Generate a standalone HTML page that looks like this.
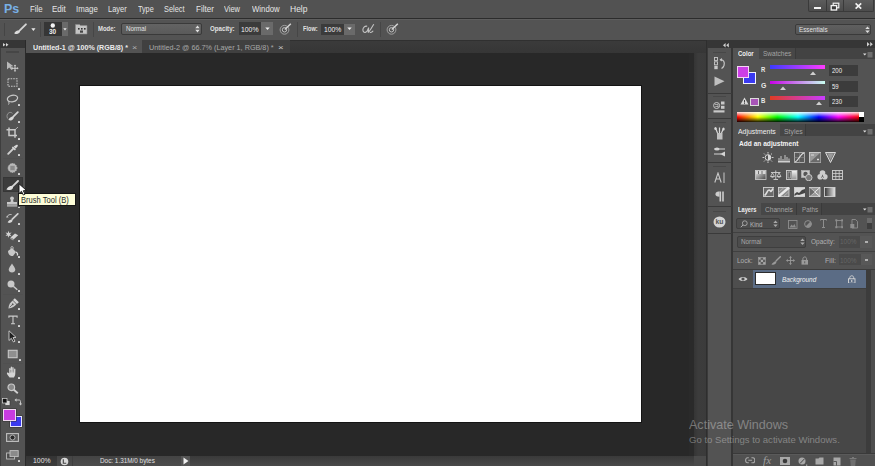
<!DOCTYPE html>
<html><head><meta charset="utf-8">
<style>
*{margin:0;padding:0;box-sizing:border-box}
html,body{width:875px;height:466px;overflow:hidden;background:#282828;font-family:"Liberation Sans",sans-serif;color:#dcdcdc;position:relative}
.a{position:absolute;display:block}
.t{position:absolute;white-space:pre;line-height:1}
</style></head><body>
<div class="a" style="left:0px;top:0px;width:875px;height:466px;background:#282828;"></div>
<div class="a" style="left:0px;top:0px;width:875px;height:18px;background:#525252;"></div>
<div class="a" style="left:0px;top:18px;width:875px;height:1px;background:#2c2c2c;"></div>
<div class="a" style="left:0px;top:19px;width:875px;height:21px;background:#535353;"></div>
<div class="a" style="left:0px;top:19px;width:875px;height:1px;background:#5e5e5e;"></div>
<div class="a" style="left:0px;top:40px;width:25px;height:426px;background:#535353;"></div>
<div class="a" style="left:0px;top:40px;width:1px;height:426px;background:#3e3e3e;"></div>
<div class="a" style="left:0px;top:40px;width:25px;height:8px;background:#363636;"></div>
<div class="a" style="left:25px;top:40px;width:1px;height:426px;background:#2a2a2a;"></div>
<div class="a" style="left:26px;top:40px;width:681px;height:13px;background:linear-gradient(#3b3b3b,#363636);"></div>
<div class="a" style="left:26px;top:40px;width:681px;height:1px;background:#303030;"></div>
<div class="a" style="left:689px;top:53px;width:5px;height:403px;background:#2a2a2a;"></div>
<div class="a" style="left:694px;top:53px;width:12px;height:403px;background:linear-gradient(90deg,#353535,#3c3c3c 35%,#3b3b3b);"></div>
<div class="a" style="left:706px;top:40px;width:1px;height:426px;background:#2e2e2e;"></div>
<div class="a" style="left:79px;top:85px;width:563px;height:338px;background:#ffffff;border:1px solid #141414;"></div>
<div class="a" style="left:26px;top:456px;width:668px;height:10px;background:linear-gradient(#3a3a3a,#494949);"></div>
<div class="a" style="left:694px;top:456px;width:12px;height:10px;background:#4a4a4a;"></div>
<div class="a" style="left:707px;top:40px;width:168px;height:8px;background:#363636;"></div>
<div class="a" style="left:707px;top:48px;width:25px;height:418px;background:#535353;"></div>
<div class="a" style="left:707px;top:48px;width:1px;height:418px;background:#3a3a3a;"></div>
<div class="a" style="left:731px;top:48px;width:2px;height:418px;background:#363636;"></div>
<div class="a" style="left:733px;top:48px;width:142px;height:418px;background:#535353;"></div>
<div class="t" style="left:3.96px;top:3px;font-size:12px;color:#78b0e6;font-weight:bold;transform:scaleX(1.038);transform-origin:0 0;">Ps</div>
<div class="t" style="left:29.51px;top:5px;font-size:8.8px;color:#e6e6e6;transform:scaleX(0.892);transform-origin:0 0;">File</div>
<div class="t" style="left:52.09px;top:5px;font-size:8.8px;color:#e6e6e6;transform:scaleX(0.914);transform-origin:0 0;">Edit</div>
<div class="t" style="left:75.51px;top:5px;font-size:8.8px;color:#e6e6e6;transform:scaleX(0.891);transform-origin:0 0;">Image</div>
<div class="t" style="left:107.95px;top:5px;font-size:8.8px;color:#e6e6e6;transform:scaleX(0.852);transform-origin:0 0;">Layer</div>
<div class="t" style="left:138.00px;top:5px;font-size:8.8px;color:#e6e6e6;transform:scaleX(0.821);transform-origin:0 0;">Type</div>
<div class="t" style="left:164.16px;top:5px;font-size:8.8px;color:#e6e6e6;transform:scaleX(0.837);transform-origin:0 0;">Select</div>
<div class="t" style="left:195.69px;top:5px;font-size:8.8px;color:#e6e6e6;transform:scaleX(0.911);transform-origin:0 0;">Filter</div>
<div class="t" style="left:224.00px;top:5px;font-size:8.8px;color:#e6e6e6;transform:scaleX(0.842);transform-origin:0 0;">View</div>
<div class="t" style="left:251.50px;top:5px;font-size:8.8px;color:#e6e6e6;transform:scaleX(0.884);transform-origin:0 0;">Window</div>
<div class="t" style="left:289.84px;top:5px;font-size:8.8px;color:#e6e6e6;transform:scaleX(0.965);transform-origin:0 0;">Help</div>
<div class="a" style="left:808px;top:0px;width:66px;height:12px;background:linear-gradient(#5c5c5c,#4c4c4c);border:1px solid #3a3a3a;border-top:none;border-radius:0 0 2px 2px;"></div>
<div class="a" style="left:826px;top:0px;width:1px;height:11px;background:#3a3a3a;"></div>
<div class="a" style="left:843px;top:0px;width:1px;height:11px;background:#3a3a3a;"></div>
<div class="a" style="left:814px;top:6.8px;width:7px;height:2px;background:#f2f2f2;"></div>
<svg class="a" style="left:830px;top:2px;" width="10" height="9" viewBox="0 0 10 9"><rect x="3.2" y="1.2" width="5.6" height="4.6" fill="none" stroke="#f0f0f0" stroke-width="1.2"/><rect x="1.2" y="3.6" width="5.4" height="4.4" fill="#3a3a3a" stroke="#f4f4f4" stroke-width="1.3"/></svg>
<svg class="a" style="left:854.2px;top:1.8px;" width="9" height="8" viewBox="0 0 9 8"><path d="M1.6 1.3 L7.2 6.7 M7.2 1.3 L1.6 6.7" stroke="#f2f2f2" stroke-width="1.6"/></svg>
<div class="t" style="left:97.80px;top:25px;font-size:7.2px;color:#e2e2e2;font-weight:bold;transform:scaleX(0.824);transform-origin:0 0;">Mode:</div>
<div class="a" style="left:121px;top:23px;width:81px;height:12px;background:linear-gradient(#636363,#5a5a5a);border:1px solid #3a3a3a;border-radius:2px;"></div>
<div class="t" style="left:125.50px;top:25px;font-size:7.2px;color:#e2e2e2;transform:scaleX(0.874);transform-origin:0 0;">Normal</div>
<div class="t" style="left:210.00px;top:25px;font-size:7.2px;color:#e2e2e2;font-weight:bold;transform:scaleX(0.857);transform-origin:0 0;">Opacity:</div>
<div class="a" style="left:239px;top:22px;width:22px;height:13px;background:#3b3b3b;"></div>
<div class="a" style="left:261px;top:22px;width:12px;height:13px;background:#6a6a6a;"></div>
<div class="t" style="left:241.05px;top:26px;font-size:7.2px;color:#f0f0f0;transform:scaleX(0.953);transform-origin:0 0;">100%</div>
<div class="t" style="left:303.10px;top:25px;font-size:7.2px;color:#e2e2e2;font-weight:bold;transform:scaleX(0.778);transform-origin:0 0;">Flow:</div>
<div class="a" style="left:321px;top:23.5px;width:23px;height:11.5px;background:#3b3b3b;"></div>
<div class="a" style="left:344px;top:23.5px;width:11px;height:11.5px;background:#6a6a6a;"></div>
<div class="t" style="left:323.75px;top:26px;font-size:7.2px;color:#f0f0f0;transform:scaleX(0.947);transform-origin:0 0;">100%</div>
<div class="a" style="left:795px;top:24px;width:76px;height:11px;background:linear-gradient(#5f5f5f,#565656);border:1px solid #3a3a3a;border-radius:2px;"></div>
<div class="t" style="left:798.50px;top:26px;font-size:7.2px;color:#e2e2e2;transform:scaleX(0.873);transform-origin:0 0;">Essentials</div>
<div class="a" style="left:4px;top:23px;width:1px;height:13px;background:#454545;"></div>
<svg class="a" style="left:13px;top:23px;" width="15" height="12" viewBox="0 0 15 12"><path d="M12.9 1.3 L6.8 7.4" stroke="#d4d4d4" stroke-width="1.9" stroke-linecap="round"/><path d="M1.2 10.2 C2.4 8.3 4.4 7 6.9 7.3 C7.5 8.6 6.6 10.5 4.2 11 C3.1 11.2 2 10.9 1.2 10.2Z" fill="#dcdcdc"/></svg>
<svg class="a" style="left:31px;top:27.5px;" width="5" height="3.5" viewBox="0 0 5 3.5"><path d="M0.3 0.3 L4.5 0.3 L2.4 3Z" fill="#e8e8e8"/></svg>
<div class="a" style="left:40px;top:22px;width:1px;height:15px;background:#464646;"></div>
<div class="a" style="left:44px;top:22px;width:18px;height:14px;background:#363636;"></div>
<div class="a" style="left:62px;top:22px;width:6px;height:14px;background:#6a6a6a;"></div>
<svg class="a" style="left:63px;top:28px;" width="4" height="3" viewBox="0 0 4 3"><path d="M0.3 0.3 L3.7 0.3 L2 2.5Z" fill="#e8e8e8"/></svg>
<svg class="a" style="left:49px;top:23px;" width="8" height="5" viewBox="0 0 8 5"><circle cx="3.8" cy="2.5" r="2.2" fill="#f4f4f4"/></svg>
<div class="t" style="left:49.10px;top:29px;font-size:6.6px;color:#f0f0f0;font-weight:bold;transform:scaleX(0.986);transform-origin:0 0;">30</div>
<svg class="a" style="left:75px;top:23px;" width="13" height="12" viewBox="0 0 13 12"><path d="M0.5 1.5 L4.5 1.5 L5.5 2.5 L12 2.5 L12 11 L0.5 11Z" fill="#c4c4c4" stroke="#8a8a8a" stroke-width="0.6"/><rect x="3" y="5" width="1.6" height="1.6" fill="#333"/><rect x="6" y="5" width="1.6" height="1.6" fill="#333"/><rect x="9" y="5" width="1.6" height="1.6" fill="#333"/><rect x="5" y="7.5" width="3" height="2.2" fill="#444"/></svg>
<div class="a" style="left:93px;top:22px;width:1px;height:15px;background:#464646;"></div>
<svg class="a" style="left:195px;top:25px;" width="5" height="8" viewBox="0 0 5 8"><path d="M0.3 3.2 L2.5 0.5 L4.7 3.2Z M0.3 4.8 L2.5 7.5 L4.7 4.8Z" fill="#e0e0e0"/></svg>
<svg class="a" style="left:264.5px;top:27px;" width="5" height="4" viewBox="0 0 5 4"><path d="M0.3 0.5 L4.7 0.5 L2.5 3Z" fill="#f0f0f0"/></svg>
<svg class="a" style="left:347px;top:27px;" width="5" height="4" viewBox="0 0 5 4"><path d="M0.3 0.5 L4.7 0.5 L2.5 3Z" fill="#f0f0f0"/></svg>
<svg class="a" style="left:279px;top:23px;" width="13" height="12" viewBox="0 0 13 12"><circle cx="5.5" cy="6.8" r="4.4" fill="none" stroke="#a8a8a8" stroke-width="0.9"/><circle cx="5.5" cy="6.8" r="2.2" fill="none" stroke="#c0c0c0" stroke-width="1"/><path d="M5.8 6.5 L11.8 0.8" stroke="#d4d4d4" stroke-width="1.5"/></svg>
<div class="a" style="left:297px;top:22px;width:1px;height:15px;background:#464646;"></div>
<svg class="a" style="left:362px;top:23px;" width="13" height="11" viewBox="0 0 13 11"><path d="M5.2 3.2 C2.5 2.8 0.9 4.8 0.9 6.8 C0.9 8.6 2 9.6 3.3 9.4 C4.8 9.2 5.8 7 6.6 4.6 C6.8 6.5 6.5 8.5 6 9.6 M6.2 9.5 C8 8 10 4 11.8 1.2 M7.8 9.4 C9 9.6 10.5 8.8 11.2 7.8" fill="none" stroke="#c4c4c4" stroke-width="1.1"/></svg>
<div class="a" style="left:380px;top:22px;width:1px;height:15px;background:#464646;"></div>
<svg class="a" style="left:386px;top:23px;" width="13" height="12" viewBox="0 0 13 12"><circle cx="5.5" cy="6.8" r="4.4" fill="none" stroke="#a8a8a8" stroke-width="0.9"/><circle cx="5.5" cy="6.8" r="2.2" fill="none" stroke="#c0c0c0" stroke-width="1"/><path d="M5.8 6.5 L11.8 0.8" stroke="#d4d4d4" stroke-width="1.5"/></svg>
<svg class="a" style="left:865px;top:26px;" width="5" height="8" viewBox="0 0 5 8"><path d="M0.3 3 L2.5 0.5 L4.7 3Z M0.3 4.6 L2.5 7.1 L4.7 4.6Z" fill="#e0e0e0"/></svg>
<div class="a" style="left:26px;top:40px;width:116px;height:13px;background:#535353;"></div>
<div class="t" style="left:32.80px;top:44px;font-size:7.6px;color:#ececec;font-weight:bold;transform:scaleX(0.935);transform-origin:0 0;">Untitled-1 @ 100% (RGB/8) *</div>
<div class="t" style="left:132.47px;top:44px;font-size:8px;color:#b0b0b0;transform:scaleX(1.133);transform-origin:0 0;">×</div>
<div class="a" style="left:142px;top:40px;width:148px;height:13px;background:#404040;"></div>
<div class="t" style="left:148.80px;top:44px;font-size:7.6px;color:#a8a8a8;transform:scaleX(0.955);transform-origin:0 0;">Untitled-2 @ 66.7% (Layer 1, RGB/8) *</div>
<div class="t" style="left:278.00px;top:44px;font-size:8px;color:#c8c8c8;transform:scaleX(1.200);transform-origin:0 0;">×</div>
<div class="a" style="left:26px;top:456px;width:31px;height:10px;background:linear-gradient(#343434,#3c3c3c);"></div>
<div class="t" style="left:32.69px;top:458px;font-size:6.8px;color:#e0e0e0;transform:scaleX(1.012);transform-origin:0 0;">100%</div>
<div class="a" style="left:57px;top:456px;width:15px;height:10px;background:linear-gradient(#444444,#4c4c4c);"></div>
<div class="a" style="left:72px;top:456px;width:109px;height:10px;background:linear-gradient(#444444,#4c4c4c);"></div>
<div class="a" style="left:72px;top:456px;width:1px;height:10px;background:#3e3e3e;"></div>
<div class="t" style="left:99.60px;top:458px;font-size:6.8px;color:#e0e0e0;transform:scaleX(0.936);transform-origin:0 0;">Doc: 1.31M/0 bytes</div>
<div class="a" style="left:181px;top:456px;width:9px;height:10px;background:#555555;"></div>
<svg class="a" style="left:60px;top:457px;" width="9" height="9" viewBox="0 0 9 9"><circle cx="4.5" cy="4.5" r="3.8" fill="#d8d8d8"/><path d="M3.3 2.3 L3.3 6.3 L6.2 6.3" fill="none" stroke="#444" stroke-width="1.1"/></svg>
<svg class="a" style="left:183px;top:457px;" width="6" height="8" viewBox="0 0 6 8"><path d="M0.5 0.5 L5.5 4 L0.5 7.5Z" fill="#f0f0f0"/></svg>
<svg class="a" style="left:2.6px;top:42.6px;" width="7" height="5" viewBox="0 0 7 5"><path d="M0 0 L2.5 1.8 L0 3.6Z M3 0 L5.5 1.8 L3 3.6Z" fill="#d4d4d4"/></svg>
<div class="a" style="left:6px;top:51px;width:13px;height:1.5px;background:#464646;"></div>
<svg class="a" style="left:6px;top:61px;" width="14" height="11" viewBox="0 0 14 11"><path d="M1 0.5 L1 8.5 L3.2 6.4 L5.5 9 L7 7.8 L5 5.5 L7.5 5.3Z" fill="#b8b8b8"/><path d="M9 4.5 L9 10 M6.3 7.3 L11.8 7.3" stroke="#cfcfcf" stroke-width="1"/><path d="M9 3.6 L7.8 5 L10.2 5Z M9 11 L7.8 9.6 L10.2 9.6Z M5.4 7.3 L6.8 6.1 L6.8 8.5Z M12.6 7.3 L11.2 6.1 L11.2 8.5Z" fill="#cfcfcf"/></svg>
<svg class="a" style="left:7px;top:78px;" width="11" height="9" viewBox="0 0 11 9"><rect x="1" y="0.8" width="9" height="7.4" fill="none" stroke="#c4c4c4" stroke-width="1.1" stroke-dasharray="1.6 1"/></svg>
<div class="a" style="left:18.4px;top:87.9px;width:1.8px;height:1.8px;background:#d8d8d8;border-radius:0.5px;"></div>
<svg class="a" style="left:6px;top:94px;" width="13" height="11" viewBox="0 0 13 11"><ellipse cx="6.5" cy="4.5" rx="5.2" ry="3.2" transform="rotate(-12 6.5 4.5)" fill="none" stroke="#c8c8c8" stroke-width="1.2"/><path d="M3 7 C2.5 8.5 3.5 9.5 2.5 10.5" fill="none" stroke="#c8c8c8" stroke-width="1"/></svg>
<div class="a" style="left:18.4px;top:104.4px;width:1.8px;height:1.8px;background:#d8d8d8;border-radius:0.5px;"></div>
<svg class="a" style="left:6px;top:111px;" width="13" height="10" viewBox="0 0 13 10"><path d="M1.6 7.5 C0.5 5.5 0.8 2.6 3.2 1.6 C4.5 1.1 5.8 1.6 6.5 2.4" fill="none" stroke="#9a9a9a" stroke-width="0.9"/><path d="M11.8 1.2 L7.3 5.6" stroke="#d4d4d4" stroke-width="1.8" stroke-linecap="round"/><path d="M2.4 8.6 C3.4 6.6 5.4 5.2 7.6 5.5 C8.2 6.9 7.3 8.8 5.1 9.4 C4.1 9.6 3.1 9.3 2.4 8.6Z" fill="#dadada"/></svg>
<div class="a" style="left:18.4px;top:121.2px;width:1.8px;height:1.8px;background:#d8d8d8;border-radius:0.5px;"></div>
<svg class="a" style="left:6px;top:127px;" width="13" height="11" viewBox="0 0 13 11"><path d="M3 0.5 L3 8.5 L11 8.5 M0.5 2.8 L9 2.8 L9 10.8" fill="none" stroke="#c8c8c8" stroke-width="1.5"/><path d="M9 2.8 L12 0" stroke="#c8c8c8" stroke-width="0.8"/></svg>
<div class="a" style="left:18.4px;top:138.20000000000002px;width:1.8px;height:1.8px;background:#d8d8d8;border-radius:0.5px;"></div>
<svg class="a" style="left:7px;top:144px;" width="12" height="11" viewBox="0 0 12 11"><path d="M1.2 9.8 L6.6 4.4" stroke="#cfcfcf" stroke-width="1.9" stroke-linecap="round"/><path d="M6.6 2.6 L9.2 0.9 C10.2 0.3 11.3 1.2 10.7 2.2 L8.6 4.7Z" fill="#d8d8d8"/><path d="M5.4 3 L8.4 6" stroke="#d8d8d8" stroke-width="1.4"/></svg>
<div class="a" style="left:18.4px;top:154.4px;width:1.8px;height:1.8px;background:#d8d8d8;border-radius:0.5px;"></div>
<div class="a" style="left:3px;top:158px;width:20px;height:1px;background:#505050;"></div>
<svg class="a" style="left:7px;top:163px;" width="11" height="10" viewBox="0 0 11 10"><circle cx="5.5" cy="5" r="4.4" fill="#b8b8b8"/><rect x="3.3" y="2.8" width="4.4" height="4.4" fill="#8a8a8a"/><circle cx="5.5" cy="5" r="4.4" fill="none" stroke="#cfcfcf" stroke-width="0.9" stroke-dasharray="1 1"/></svg>
<div class="a" style="left:18.4px;top:173.20000000000002px;width:1.8px;height:1.8px;background:#d8d8d8;border-radius:0.5px;"></div>
<div class="a" style="left:3px;top:177px;width:19.5px;height:15px;background:#3c3c3c;border:1px solid #363636;"></div>
<svg class="a" style="left:6px;top:180px;" width="13" height="10" viewBox="0 0 13 10"><path d="M12 1 L6.8 6.2" stroke="#d4d4d4" stroke-width="1.8" stroke-linecap="round"/><path d="M0.4 9.4 C1.6 7.2 3.9 5.6 6.9 5.9 C7.6 7.4 6.6 9.6 3.9 10 C2.6 10.2 1.3 9.9 0.4 9.4Z" fill="#dcdcdc"/></svg>
<svg class="a" style="left:6px;top:196px;" width="12" height="11" viewBox="0 0 12 11"><circle cx="6" cy="2.3" r="1.9" fill="#c8c8c8"/><path d="M5 3.5 L7 3.5 L7.5 6 L4.5 6Z" fill="#c8c8c8"/><rect x="1" y="6" width="10" height="2.6" fill="#c8c8c8"/><rect x="1" y="9.3" width="10" height="1.2" fill="#c8c8c8"/></svg>
<div class="a" style="left:18.4px;top:206.5px;width:1.8px;height:1.8px;background:#d8d8d8;border-radius:0.5px;"></div>
<svg class="a" style="left:6px;top:213px;" width="13" height="10" viewBox="0 0 13 10"><path d="M11.8 0.8 L6.3 6.2" stroke="#d0d0d0" stroke-width="1.7" stroke-linecap="round"/><path d="M1.6 9.3 C2.6 7.6 4.3 6.4 6.4 6.6 C6.9 7.8 6.1 9.4 4.2 9.8 C3.3 10 2.3 9.8 1.6 9.3Z" fill="#d8d8d8"/><path d="M1.2 3.8 C1.8 2 3.6 1.2 5.6 1.6" fill="none" stroke="#c4c4c4" stroke-width="1"/><path d="M0 4.6 L1.2 2.4 L2.6 4.4Z" fill="#c4c4c4"/></svg>
<div class="a" style="left:18.4px;top:223.20000000000002px;width:1.8px;height:1.8px;background:#d8d8d8;border-radius:0.5px;"></div>
<svg class="a" style="left:5px;top:229.5px;" width="14" height="11" viewBox="0 0 14 11"><path d="M3.5 0.8 L4.3 3 L6.6 2.6 L5 4.3 L6.4 6.2 L4.2 5.7 L3.4 7.8 L2.7 5.6 L0.5 5.9 L2 4.2 L0.6 2.4 L2.8 2.9Z" fill="#d0d0d0"/><path d="M5.5 7.5 L10 3.6 L13.2 5.2 L8.8 9.2Z" fill="#d4d4d4"/><path d="M5.5 7.5 L8.8 9.2 L8.2 10.4 L5 8.8Z" fill="#9a9a9a"/></svg>
<div class="a" style="left:18.4px;top:239.9px;width:1.8px;height:1.8px;background:#d8d8d8;border-radius:0.5px;"></div>
<svg class="a" style="left:7px;top:246px;" width="12" height="11" viewBox="0 0 12 11"><path d="M1 5 L5 2 L9 6 L6 10 C4 10.5 1 9 1 5Z" fill="#c8c8c8"/><path d="M4.5 4 C3.5 2 3.8 0.5 5 0.5 C6.2 0.5 6.5 2 5.8 3.5" fill="none" stroke="#c8c8c8" stroke-width="0.9"/><path d="M9 6 C10.5 7 11 8 10.2 9.5" fill="none" stroke="#dcdcdc" stroke-width="1.3"/></svg>
<div class="a" style="left:18.4px;top:256.4px;width:1.8px;height:1.8px;background:#d8d8d8;border-radius:0.5px;"></div>
<svg class="a" style="left:8px;top:263px;" width="8" height="10" viewBox="0 0 8 10"><path d="M4 0.5 C5 2.5 7.3 4.8 7.3 6.6 C7.3 8.4 5.8 9.5 4 9.5 C2.2 9.5 0.7 8.4 0.7 6.6 C0.7 4.8 3 2.5 4 0.5Z" fill="#c4c4c4"/></svg>
<div class="a" style="left:18.4px;top:273.2px;width:1.8px;height:1.8px;background:#d8d8d8;border-radius:0.5px;"></div>
<svg class="a" style="left:7px;top:280px;" width="12" height="11" viewBox="0 0 12 11"><circle cx="4" cy="4" r="3.5" fill="#c8c8c8"/><path d="M6.3 6.3 L10.3 9.8" stroke="#c8c8c8" stroke-width="1.5"/></svg>
<div class="a" style="left:18.4px;top:289.9px;width:1.8px;height:1.8px;background:#d8d8d8;border-radius:0.5px;"></div>
<div class="a" style="left:3px;top:293.5px;width:20px;height:1px;background:#505050;"></div>
<svg class="a" style="left:7px;top:297.5px;" width="12" height="12" viewBox="0 0 12 12"><g transform="rotate(-135 6 6)"><path d="M6 -0.5 C8.6 2.5 9 5.5 8.6 8.2 L3.4 8.2 C3 5.5 3.4 2.5 6 -0.5Z" fill="#cacaca"/><rect x="3.2" y="8.8" width="5.6" height="2.6" fill="#d6d6d6"/><path d="M6 1.5 L6 5.2" stroke="#555" stroke-width="0.7"/><circle cx="6" cy="5.6" r="0.9" fill="#555"/></g></svg>
<div class="a" style="left:18.4px;top:308.29999999999995px;width:1.8px;height:1.8px;background:#d8d8d8;border-radius:0.5px;"></div>
<svg class="a" style="left:8px;top:315px;" width="10" height="10" viewBox="0 0 10 10"><path d="M0.9 2.8 L0.9 1.1 L9.1 1.1 L9.1 2.8 M5 1.1 L5 8.8 M3 8.8 L7 8.8" fill="none" stroke="#cccccc" stroke-width="1.1"/></svg>
<div class="a" style="left:18.4px;top:324.9px;width:1.8px;height:1.8px;background:#d8d8d8;border-radius:0.5px;"></div>
<svg class="a" style="left:8px;top:330px;" width="9" height="13" viewBox="0 0 9 13"><path d="M1 0.8 L1 10.5 L3.3 8.3 L5.5 12 L7 11.2 L5 7.6 L8 7.4Z" fill="#202020" stroke="#cfcfcf" stroke-width="0.9"/></svg>
<div class="a" style="left:18.4px;top:340.9px;width:1.8px;height:1.8px;background:#d8d8d8;border-radius:0.5px;"></div>
<svg class="a" style="left:7px;top:349px;" width="11" height="10" viewBox="0 0 11 10"><rect x="1.3" y="1.3" width="8.8" height="7.4" fill="#8f8f8f" stroke="#c8c8c8" stroke-width="1.1"/></svg>
<div class="a" style="left:19.2px;top:359.2px;width:1.8px;height:1.8px;background:#d8d8d8;border-radius:0.5px;"></div>
<div class="a" style="left:3px;top:362.5px;width:20px;height:1px;background:#505050;"></div>
<svg class="a" style="left:6px;top:366px;" width="13" height="12" viewBox="0 0 13 12"><path d="M3.6 11.4 C2.4 10 0.6 8 0.9 7 C1.3 6.1 2.4 6.5 3.2 7.6 L3.2 2.6 C3.2 1.7 4.5 1.7 4.5 2.6 L4.5 6 L4.7 1.2 C4.7 0.3 6 0.3 6 1.2 L6 6 L6.3 1.7 C6.3 0.8 7.6 0.8 7.6 1.7 L7.6 6.2 L8.1 3.2 C8.2 2.3 9.5 2.4 9.4 3.3 L9.3 7.6 C9.3 9.4 8.6 10.6 8 11.4Z" fill="#d4d4d4"/><path d="M4.5 4 L4.5 6.5 M6 3.8 L6 6.5 M7.6 4.2 L7.6 6.6" stroke="#7a7a7a" stroke-width="0.5"/></svg>
<div class="a" style="left:18.4px;top:377.4px;width:1.8px;height:1.8px;background:#d8d8d8;border-radius:0.5px;"></div>
<svg class="a" style="left:7px;top:383px;" width="12" height="11" viewBox="0 0 12 11"><circle cx="4.3" cy="4.3" r="3.3" fill="#8a8a8a" stroke="#c8c8c8" stroke-width="1.2"/><path d="M6.8 6.8 L10.8 10.3" stroke="#d0d0d0" stroke-width="1.8"/></svg>
<svg class="a" style="left:2px;top:398px;" width="9" height="8" viewBox="0 0 9 8"><rect x="3" y="2.5" width="5" height="5" fill="#d8d8d8" stroke="#333" stroke-width="0.6"/><rect x="0.5" y="0.5" width="4.5" height="4.5" fill="#111" stroke="#d8d8d8" stroke-width="0.7"/></svg>
<svg class="a" style="left:14px;top:398px;" width="8" height="8" viewBox="0 0 8 8"><path d="M1.5 2 L5 2 C6 2 6.5 2.5 6.5 3.5 L6.5 6" fill="none" stroke="#c8c8c8" stroke-width="1"/><path d="M0.5 2 L2.5 0.3 L2.5 3.7Z M6.5 7.5 L4.8 5.5 L8.2 5.5Z" fill="#c8c8c8"/></svg>
<div class="a" style="left:10px;top:415.5px;width:12px;height:11.5px;background:#3a3af0;border:1px solid #e8e8ff;box-shadow:0 0 0 0.5px #333;"></div>
<div class="a" style="left:3px;top:408.5px;width:12.5px;height:12px;background:#c83ce0;border:1px solid #f0d8f0;box-shadow:0 0 0 0.5px #333;"></div>
<svg class="a" style="left:6px;top:433px;" width="13" height="9" viewBox="0 0 13 9"><rect x="0.6" y="0.6" width="11.8" height="7.8" fill="#5a5a5a" stroke="#c0c0c0" stroke-width="1.1"/><circle cx="6.5" cy="4.5" r="2.5" fill="#2a2a2a" stroke="#bdbdbd" stroke-width="0.9"/></svg>
<svg class="a" style="left:6px;top:450px;" width="13" height="10" viewBox="0 0 13 10"><rect x="0.6" y="3" width="8" height="6" fill="#4a4a4a" stroke="#c0c0c0" stroke-width="0.9"/><rect x="4" y="0.6" width="8.2" height="6" fill="#8a8a8a" stroke="#c0c0c0" stroke-width="0.9"/></svg>
<div class="a" style="left:18.4px;top:459.9px;width:1.8px;height:1.8px;background:#d8d8d8;border-radius:0.5px;"></div>
<svg class="a" style="left:723px;top:42.5px;" width="7" height="5" viewBox="0 0 7 5"><path d="M2.6 0 L0 2.2 L2.6 4.4Z M5.8 0 L3.2 2.2 L5.8 4.4Z" fill="#d0d0d0"/></svg>
<svg class="a" style="left:867px;top:42px;" width="7" height="5" viewBox="0 0 7 5"><path d="M0 0 L2.6 2.2 L0 4.4Z M3.2 0 L5.8 2.2 L3.2 4.4Z" fill="#d0d0d0"/></svg>
<div class="a" style="left:713px;top:51.5px;width:13px;height:1px;background:#474747;"></div>
<svg class="a" style="left:714px;top:57px;" width="12" height="13" viewBox="0 0 12 13"><rect x="0.5" y="0.5" width="3" height="3" fill="none" stroke="#c8c8c8" stroke-width="0.9"/><rect x="0.5" y="4.8" width="3" height="3" fill="none" stroke="#c8c8c8" stroke-width="0.9"/><rect x="0.3" y="8.8" width="3.4" height="3.4" fill="#c8c8c8"/><path d="M6.5 3 C9.5 2.5 11 5 10 8.5 C9.5 10 8.5 11 7.5 11.5" fill="none" stroke="#c8c8c8" stroke-width="1.2"/><path d="M5.5 2.8 L8 1 L7.8 4.5Z" fill="#c8c8c8"/></svg>
<svg class="a" style="left:714px;top:76px;" width="11" height="11" viewBox="0 0 11 11"><path d="M0.5 0.5 L10.5 5.2 L0.5 10Z" fill="#bfbfbf"/></svg>
<div class="a" style="left:708px;top:92.5px;width:24px;height:1px;background:#3a3a3a;"></div>
<div class="a" style="left:713px;top:96px;width:13px;height:1px;background:#474747;"></div>
<svg class="a" style="left:713px;top:101px;" width="13" height="12" viewBox="0 0 13 12"><circle cx="3.6" cy="4.5" r="3" fill="none" stroke="#c8c8c8" stroke-width="1"/><path d="M2 3.5 L5 3.5 L5 6.2 M2.3 5.5 L5 5.5" stroke="#c8c8c8" stroke-width="0.7" fill="none"/><rect x="8" y="0.5" width="3.5" height="3" fill="#c8c8c8"/><rect x="8" y="4.8" width="3.5" height="3" fill="#c8c8c8"/><rect x="0.5" y="9.3" width="11" height="2.2" fill="#c8c8c8"/></svg>
<div class="a" style="left:708px;top:117.5px;width:24px;height:1px;background:#3a3a3a;"></div>
<div class="a" style="left:713px;top:121.5px;width:13px;height:1px;background:#474747;"></div>
<svg class="a" style="left:714px;top:127px;" width="12" height="13" viewBox="0 0 12 13"><rect x="3" y="6" width="5.5" height="6.5" fill="#c0c0c0"/><path d="M3.5 6 L1.5 1 M5.5 6 L5.5 0.5 M7.5 6 L9.5 1.5" stroke="#d8d8d8" stroke-width="1.2"/><ellipse cx="1.5" cy="1.5" rx="1.2" ry="1.5" fill="#d8d8d8"/><ellipse cx="9.5" cy="2" rx="1.2" ry="1.5" fill="#d8d8d8"/></svg>
<svg class="a" style="left:713px;top:146px;" width="13" height="11" viewBox="0 0 13 11"><path d="M1 3 L12 3" stroke="#c8c8c8" stroke-width="1.1"/><ellipse cx="4" cy="3" rx="2.5" ry="1.6" fill="#d4d4d4"/><path d="M1 8 L8 8" stroke="#c8c8c8" stroke-width="1.1"/><path d="M7 8 L12 5.5 L12 10.5Z" fill="#d4d4d4"/></svg>
<div class="a" style="left:708px;top:162px;width:24px;height:1px;background:#3a3a3a;"></div>
<div class="a" style="left:713px;top:166px;width:13px;height:1px;background:#474747;"></div>
<svg class="a" style="left:714px;top:172px;" width="12" height="12" viewBox="0 0 12 12"><path d="M0.8 10.5 L4 1 L7.2 10.5 M2 7 L6 7" fill="none" stroke="#c8c8c8" stroke-width="1.1"/><path d="M10 0.5 L10 11" stroke="#c8c8c8" stroke-width="1"/></svg>
<svg class="a" style="left:715px;top:191px;" width="10" height="11" viewBox="0 0 10 11"><path d="M4.5 0.5 C1 0.5 0.5 2 0.5 3.2 C0.5 4.5 1.5 5.8 4.5 5.8Z" fill="#cdcdcd"/><rect x="4.5" y="0.5" width="1.6" height="10" fill="#cdcdcd"/><rect x="7.2" y="0.5" width="1.6" height="10" fill="#cdcdcd"/></svg>
<div class="a" style="left:708px;top:206px;width:24px;height:1px;background:#3a3a3a;"></div>
<div class="a" style="left:713px;top:210.5px;width:13px;height:1px;background:#474747;"></div>
<svg class="a" style="left:713px;top:216px;" width="13" height="12" viewBox="0 0 13 12"><ellipse cx="6.5" cy="6" rx="6" ry="5.6" fill="#d4d4d4"/><text x="6.5" y="8.4" font-family="Liberation Sans" font-size="6.8" font-weight="bold" fill="#555" text-anchor="middle">ku</text></svg>
<div class="a" style="left:708px;top:233px;width:24px;height:1px;background:#3a3a3a;"></div>
<div class="a" style="left:733px;top:48px;width:142px;height:10.5px;background:#434343;"></div>
<div class="a" style="left:733px;top:48px;width:25.5px;height:10.5px;background:#535353;"></div>
<div class="a" style="left:758.5px;top:48px;width:37px;height:10.5px;background:#474747;border-right:1px solid #3a3a3a;"></div>
<div class="t" style="left:737.90px;top:50px;font-size:7px;color:#f0f0f0;font-weight:bold;transform:scaleX(0.856);transform-origin:0 0;">Color</div>
<div class="t" style="left:763.00px;top:50px;font-size:7px;color:#a4a4a4;transform:scaleX(0.933);transform-origin:0 0;">Swatches</div>
<svg class="a" style="left:863px;top:51.5px;" width="10" height="6" viewBox="0 0 10 6"><path d="M0 1.5 L3.5 1.5 L1.75 3.5Z" fill="#e0e0e0"/><rect x="4.5" y="0" width="5" height="5.5" fill="#6e6e6e"/></svg>
<div class="a" style="left:743px;top:71.5px;width:12.5px;height:12.5px;background:#3a3af2;border:1px solid #f2f2ff;"></div>
<div class="a" style="left:736.5px;top:65.5px;width:12.5px;height:12px;background:#cc3ee6;border:1px solid #f4d4f4;"></div>
<div class="t" style="left:760.80px;top:66px;font-size:7.2px;color:#e8e8e8;font-weight:bold;transform:scaleX(0.820);transform-origin:0 0;">R</div>
<div class="t" style="left:760.60px;top:82px;font-size:7.2px;color:#e8e8e8;font-weight:bold;transform:scaleX(0.960);transform-origin:0 0;">G</div>
<div class="t" style="left:760.80px;top:97px;font-size:7.2px;color:#e8e8e8;font-weight:bold;transform:scaleX(0.840);transform-origin:0 0;">B</div>
<div class="a" style="left:770px;top:65px;width:54.5px;height:4px;background:linear-gradient(90deg,#3b3bff,#ff3bff);"></div>
<div class="a" style="left:770px;top:80.5px;width:54.5px;height:3.5px;background:linear-gradient(90deg,#c800e6,#c8fff0);"></div>
<div class="a" style="left:770px;top:96px;width:54.5px;height:4px;background:linear-gradient(90deg,#e03c22,#c83cff);"></div>
<svg class="a" style="left:809.5px;top:70.5px;" width="6" height="4.5" viewBox="0 0 6 4.5"><path d="M3 0.5 L6 4 L0 4Z" fill="#d0d0d0"/></svg>
<svg class="a" style="left:780px;top:85.5px;" width="6" height="4.5" viewBox="0 0 6 4.5"><path d="M3 0.5 L6 4 L0 4Z" fill="#d0d0d0"/></svg>
<svg class="a" style="left:816px;top:100.8px;" width="6" height="4.5" viewBox="0 0 6 4.5"><path d="M3 0.5 L6 4 L0 4Z" fill="#d0d0d0"/></svg>
<div class="a" style="left:829px;top:64.5px;width:29px;height:11px;background:#3c3c3c;"></div>
<div class="t" style="left:831.70px;top:67px;font-size:7.2px;color:#f0f0f0;transform:scaleX(0.842);transform-origin:0 0;">200</div>
<div class="a" style="left:829px;top:80.5px;width:29px;height:11px;background:#3c3c3c;"></div>
<div class="t" style="left:831.70px;top:83px;font-size:7.2px;color:#f0f0f0;transform:scaleX(0.837);transform-origin:0 0;">59</div>
<div class="a" style="left:829px;top:95.5px;width:29px;height:11px;background:#3c3c3c;"></div>
<div class="t" style="left:831.70px;top:98px;font-size:7.2px;color:#f0f0f0;transform:scaleX(0.842);transform-origin:0 0;">230</div>
<svg class="a" style="left:739.5px;top:97px;" width="9" height="8" viewBox="0 0 9 8"><path d="M4.5 0.5 L8.5 7.5 L0.5 7.5Z" fill="#d8d8d8"/><rect x="4" y="3" width="1" height="2.6" fill="#444"/><rect x="4" y="6" width="1" height="0.8" fill="#444"/></svg>
<div class="a" style="left:750px;top:97.5px;width:8.5px;height:8.5px;background:#a855b8;border:1px solid #dcdcdc;"></div>
<div class="a" style="left:737px;top:112px;width:122px;height:10px;background:linear-gradient(180deg,rgba(255,255,255,0.9) 0%,rgba(255,255,255,0) 50%,rgba(0,0,0,0) 50%,rgba(0,0,0,0.9) 100%),linear-gradient(90deg,#ff0000 0%,#ffff00 17%,#00ff00 33%,#00ffff 50%,#0000ff 67%,#ff00ff 83%,#ff0000 100%);"></div>
<div class="a" style="left:859px;top:112px;width:5px;height:5px;background:#ffffff;"></div>
<div class="a" style="left:859px;top:117px;width:5px;height:5px;background:#000000;"></div>
<div class="a" style="left:733px;top:124px;width:142px;height:11.5px;background:#434343;"></div>
<div class="a" style="left:733px;top:124px;width:46.5px;height:11.5px;background:#535353;"></div>
<div class="a" style="left:779.5px;top:124px;width:26.5px;height:11.5px;background:#474747;border-right:1px solid #3a3a3a;"></div>
<div class="t" style="left:737.50px;top:128px;font-size:7.2px;color:#f0f0f0;transform:scaleX(0.954);transform-origin:0 0;">Adjustments</div>
<div class="t" style="left:783.90px;top:128px;font-size:7.2px;color:#a4a4a4;transform:scaleX(0.958);transform-origin:0 0;">Styles</div>
<svg class="a" style="left:863px;top:128.5px;" width="10" height="6" viewBox="0 0 10 6"><path d="M0 1.5 L3.5 1.5 L1.75 3.5Z" fill="#e0e0e0"/><rect x="4.5" y="0" width="5" height="5.5" fill="#6e6e6e"/></svg>
<div class="t" style="left:739.10px;top:140px;font-size:7.2px;color:#f4f4f4;font-weight:bold;transform:scaleX(0.918);transform-origin:0 0;">Add an adjustment</div>
<svg class="a" style="left:762px;top:152px;" width="12" height="11" viewBox="0 0 12 11"><circle cx="6" cy="5.5" r="2.8" fill="none" stroke="#d8d8d8" stroke-width="1"/><path d="M6 2.7 A2.8 2.8 0 0 1 6 8.3Z" fill="#d8d8d8"/><path d="M6 0 L6 1.6 M6 9.4 L6 11 M0.5 5.5 L2.1 5.5 M9.9 5.5 L11.5 5.5 M2 1.5 L3.1 2.6 M8.9 8.4 L10 9.5 M10 1.5 L8.9 2.6 M3.1 8.4 L2 9.5" stroke="#d8d8d8" stroke-width="0.9"/></svg>
<svg class="a" style="left:778px;top:152px;" width="12" height="11" viewBox="0 0 12 11"><path d="M0.5 10 L0.5 6 L1.5 6 L1.5 10 M2.5 10 L2.5 4 L3.5 4 L3.5 10 M4.5 10 L4.5 7 L5.5 7 L5.5 10 M6.5 10 L6.5 3 L7.5 3 L7.5 10 M8.5 10 L8.5 5 L9.5 5 L9.5 10 M10.5 10 L10.5 6.5 L11.5 6.5 L11.5 10Z" fill="#c8c8c8"/><rect x="0" y="9" width="12" height="1.5" fill="#cfcfcf"/></svg>
<svg class="a" style="left:794px;top:152px;" width="11" height="11" viewBox="0 0 11 11"><rect x="0.5" y="0.5" width="10" height="10" fill="#5a5a5a" stroke="#c0c0c0" stroke-width="0.8"/><path d="M0.5 5.5 L10.5 5.5 M5.5 0.5 L5.5 10.5" stroke="#8a8a8a" stroke-width="0.6"/><path d="M1 10 C4 9.5 6 2 10 1" fill="none" stroke="#e0e0e0" stroke-width="1.1"/></svg>
<svg class="a" style="left:809px;top:152px;" width="12" height="11" viewBox="0 0 12 11"><rect x="0.5" y="0.5" width="11" height="10" fill="#9a9a9a" stroke="#d0d0d0" stroke-width="0.9"/><path d="M0.5 10.5 L11.5 0.5 L11.5 10.5Z" fill="#6a6a6a"/><path d="M2 3 L5 3 M8 7.5 L10 7.5 M9 6.5 L9 8.5" stroke="#eee" stroke-width="0.8"/></svg>
<svg class="a" style="left:824.5px;top:152px;" width="11" height="11" viewBox="0 0 11 11"><path d="M0.5 0.5 L10.5 0.5 L5.5 10.5Z" fill="#7a7a7a" stroke="#d8d8d8" stroke-width="1"/><path d="M2.5 1.5 L8.5 1.5 L5.5 7.5Z" fill="#9a9a9a"/></svg>
<svg class="a" style="left:755px;top:169.5px;" width="11.5" height="10" viewBox="0 0 11.5 10"><rect x="0.5" y="0.5" width="10.5" height="9" fill="url(#gh)" stroke="#d0d0d0" stroke-width="0.8"/><defs><linearGradient id="gh" x1="0" y1="0" x2="1" y2="1"><stop offset="0" stop-color="#eee"/><stop offset="1" stop-color="#444"/></linearGradient></defs><rect x="1" y="1" width="9.5" height="3" fill="#d8d8d8"/><path d="M3.5 1 L3.5 4 M7 1 L7 4" stroke="#555" stroke-width="0.8"/></svg>
<svg class="a" style="left:770px;top:169.5px;" width="11.5" height="10" viewBox="0 0 11.5 10"><path d="M5.75 0.5 L5.75 9 M1 2.5 L10.5 2.5 M3.5 9.5 L8 9.5" stroke="#d0d0d0" stroke-width="0.9"/><path d="M2.5 3 L0.5 6.5 L4.5 6.5Z M9 3 L7 6.5 L11 6.5Z" fill="none" stroke="#d0d0d0" stroke-width="0.8"/><path d="M0.5 6.5 C1 8 4 8 4.5 6.5 M7 6.5 C7.5 8 10.5 8 11 6.5" fill="#d0d0d0"/></svg>
<svg class="a" style="left:786px;top:169.5px;" width="11.5" height="10" viewBox="0 0 11.5 10"><rect x="0.5" y="0.5" width="10.5" height="9" fill="#dadada" stroke="#d0d0d0" stroke-width="0.8"/><rect x="1" y="1" width="4.5" height="8" fill="#5e5e5e"/><rect x="2" y="2" width="2.5" height="6" fill="none" stroke="#c8c8c8" stroke-width="0.6"/><rect x="6" y="1" width="4.5" height="8" fill="url(#gbw)"/><defs><linearGradient id="gbw" x1="0" y1="0" x2="0" y2="1"><stop offset="0" stop-color="#f0f0f0"/><stop offset="1" stop-color="#999"/></linearGradient></defs></svg>
<svg class="a" style="left:801px;top:169.5px;" width="11.5" height="11" viewBox="0 0 11.5 11"><rect x="0.5" y="0.5" width="8" height="7" fill="#c8c8c8" stroke="#bbb" stroke-width="0.6"/><circle cx="4.5" cy="4" r="2.2" fill="#555"/><circle cx="7.8" cy="7.6" r="3.2" fill="#7a7a7a" stroke="#cfcfcf" stroke-width="0.9"/></svg>
<svg class="a" style="left:816.5px;top:169.5px;" width="11" height="10" viewBox="0 0 11 10"><circle cx="5.5" cy="3" r="2.8" fill="#cdcdcd"/><circle cx="3.2" cy="6.8" r="2.8" fill="#cdcdcd"/><circle cx="7.8" cy="6.8" r="2.8" fill="#cdcdcd"/><path d="M5.5 4.8 L5.5 6.5 M4 7.5 L5.5 6.5 L7 7.5" stroke="#555" stroke-width="0.8" fill="none"/></svg>
<svg class="a" style="left:832px;top:169.5px;" width="11" height="10" viewBox="0 0 11 10"><rect x="0.5" y="0.5" width="10" height="9" fill="#5a5a5a" stroke="#d0d0d0" stroke-width="0.9"/><path d="M3.8 0.5 L3.8 9.5 M7.2 0.5 L7.2 9.5 M0.5 3.5 L10.5 3.5 M0.5 6.5 L10.5 6.5" stroke="#d0d0d0" stroke-width="0.8"/></svg>
<svg class="a" style="left:762.5px;top:187px;" width="11.5" height="10" viewBox="0 0 11.5 10"><rect x="0.5" y="0.5" width="10.5" height="9" fill="#6a6a6a" stroke="#d0d0d0" stroke-width="0.9"/><path d="M1.5 8.5 C4 7 4 3 6 3 C8 3 7 7 10 1.5" fill="none" stroke="#e0e0e0" stroke-width="1.6"/></svg>
<svg class="a" style="left:778px;top:187px;" width="11.5" height="10" viewBox="0 0 11.5 10"><rect x="0.5" y="0.5" width="10.5" height="9" fill="#8a8a8a" stroke="#d0d0d0" stroke-width="0.9"/><path d="M0.5 9.5 L11 0.5" stroke="#e8e8e8" stroke-width="2.5"/><path d="M0.5 5.5 L6 0.5 M5.5 9.5 L11 4.5" stroke="#b0b0b0" stroke-width="1"/></svg>
<svg class="a" style="left:793.5px;top:187px;" width="11.5" height="10" viewBox="0 0 11.5 10"><rect x="0.5" y="0.5" width="10.5" height="9" fill="#d8d8d8" stroke="#d0d0d0" stroke-width="0.9"/><path d="M0.5 7 L3 5 L5 6 L8 3 L11 2 L11 6 L8 7 L5 8 L3 7.5 L0.5 9Z" fill="#444"/></svg>
<svg class="a" style="left:809px;top:187px;" width="11.5" height="10" viewBox="0 0 11.5 10"><rect x="0.5" y="0.5" width="10.5" height="9" fill="#9a9a9a" stroke="#d0d0d0" stroke-width="0.9"/><path d="M0.5 0.5 L5.75 5 L11 0.5 M0.5 9.5 L5.75 5 L11 9.5" stroke="#e8e8e8" stroke-width="1" fill="none"/><path d="M0.5 0.5 L5.75 5 L0.5 9.5Z" fill="#6a6a6a"/></svg>
<svg class="a" style="left:824px;top:187px;" width="11.5" height="10" viewBox="0 0 11.5 10"><defs><linearGradient id="gm" x1="0" y1="0" x2="1" y2="0"><stop offset="0" stop-color="#333"/><stop offset="1" stop-color="#e8e8e8"/></linearGradient></defs><rect x="0.5" y="0.5" width="10.5" height="9" fill="url(#gm)" stroke="#d0d0d0" stroke-width="0.9"/></svg>
<div class="a" style="left:733px;top:202.5px;width:142px;height:12px;background:#434343;"></div>
<div class="a" style="left:733px;top:202.5px;width:27.5px;height:12px;background:#535353;"></div>
<div class="a" style="left:760.5px;top:202.5px;width:36.5px;height:12px;background:#474747;border-right:1px solid #3a3a3a;"></div>
<div class="a" style="left:797px;top:202.5px;width:25px;height:12px;background:#474747;border-right:1px solid #3a3a3a;"></div>
<div class="t" style="left:737.50px;top:206px;font-size:7px;color:#f0f0f0;font-weight:bold;transform:scaleX(0.813);transform-origin:0 0;">Layers</div>
<div class="t" style="left:764.80px;top:206px;font-size:7px;color:#a4a4a4;transform:scaleX(0.941);transform-origin:0 0;">Channels</div>
<div class="t" style="left:801.60px;top:206px;font-size:7px;color:#a4a4a4;transform:scaleX(0.900);transform-origin:0 0;">Paths</div>
<svg class="a" style="left:863px;top:206.5px;" width="10" height="6" viewBox="0 0 10 6"><path d="M0 1.5 L3.5 1.5 L1.75 3.5Z" fill="#e0e0e0"/><rect x="4.5" y="0" width="5" height="5.5" fill="#6e6e6e"/></svg>
<div class="a" style="left:736px;top:218px;width:44px;height:11px;background:#4c4c4c;border:1px solid #3e3e3e;border-radius:2px;"></div>
<svg class="a" style="left:740px;top:220px;" width="8" height="8" viewBox="0 0 8 8"><circle cx="4.8" cy="3.2" r="2.4" fill="none" stroke="#aaa" stroke-width="0.9"/><path d="M3 5 L0.8 7.2" stroke="#aaa" stroke-width="1"/></svg>
<div class="t" style="left:749.90px;top:221px;font-size:7px;color:#b4b4b4;transform:scaleX(0.886);transform-origin:0 0;">Kind</div>
<svg class="a" style="left:772.5px;top:220px;" width="5" height="8" viewBox="0 0 5 8"><path d="M0.3 3 L2.5 0.5 L4.7 3Z M0.3 4.6 L2.5 7.1 L4.7 4.6Z" fill="#a8a8a8"/></svg>
<svg class="a" style="left:788px;top:219.5px;" width="9.5" height="9" viewBox="0 0 9.5 9"><rect x="0.5" y="0.5" width="8.5" height="8" fill="none" stroke="#8e8e8e" stroke-width="0.9"/><path d="M1.5 7.5 L3.5 4.5 L5 6 L6.5 4 L8 7.5Z" fill="#8e8e8e"/></svg>
<svg class="a" style="left:803.5px;top:219.5px;" width="8" height="8" viewBox="0 0 8 8"><circle cx="4" cy="4" r="3.4" fill="none" stroke="#8e8e8e" stroke-width="1"/><path d="M4 0.6 A3.4 3.4 0 0 1 4 7.4Z" fill="#8e8e8e" transform="rotate(45 4 4)"/></svg>
<svg class="a" style="left:820px;top:219px;" width="7" height="9" viewBox="0 0 7 9"><path d="M0.5 1.5 L0.5 0.5 L6.5 0.5 L6.5 1.5 M3.5 0.5 L3.5 8.5 M2 8.5 L5 8.5" fill="none" stroke="#8e8e8e" stroke-width="1"/></svg>
<svg class="a" style="left:834.5px;top:219px;" width="8.5" height="9.5" viewBox="0 0 8.5 9.5"><rect x="1.5" y="1.5" width="5.5" height="6.5" fill="none" stroke="#8e8e8e" stroke-width="0.9"/><rect x="0.3" y="0.3" width="2" height="2" fill="#8e8e8e"/><rect x="6.2" y="0.3" width="2" height="2" fill="#8e8e8e"/><rect x="0.3" y="7.2" width="2" height="2" fill="#8e8e8e"/><rect x="6.2" y="7.2" width="2" height="2" fill="#8e8e8e"/></svg>
<svg class="a" style="left:850px;top:219px;" width="8" height="9.5" viewBox="0 0 8 9.5"><path d="M2 0.5 L5.5 0.5 L7.5 2.5 L7.5 9 L2 9Z" fill="none" stroke="#8e8e8e" stroke-width="0.9"/><rect x="0.3" y="5" width="4" height="4.2" fill="#8e8e8e"/></svg>
<div class="a" style="left:866.5px;top:218px;width:5px;height:10.5px;background:#6a6a6a;"></div>
<div class="a" style="left:866.5px;top:223px;width:5px;height:5.5px;background:#3e3e3e;"></div>
<div class="a" style="left:733px;top:232px;width:142px;height:1px;background:#404040;"></div>
<div class="a" style="left:737px;top:235.5px;width:69px;height:12.5px;background:#4c4c4c;border:1px solid #3e3e3e;border-radius:2px;"></div>
<div class="t" style="left:740.80px;top:238px;font-size:7px;color:#a8a8a8;transform:scaleX(0.905);transform-origin:0 0;">Normal</div>
<svg class="a" style="left:800px;top:237.5px;" width="5" height="8" viewBox="0 0 5 8"><path d="M0.3 3 L2.5 0.5 L4.7 3Z M0.3 4.6 L2.5 7.1 L4.7 4.6Z" fill="#a8a8a8"/></svg>
<div class="t" style="left:811.20px;top:238px;font-size:7px;color:#b0b0b0;transform:scaleX(0.928);transform-origin:0 0;">Opacity:</div>
<div class="a" style="left:838.5px;top:235.5px;width:21.5px;height:12.5px;background:#4a4a4a;"></div>
<div class="t" style="left:840.32px;top:239px;font-size:6.6px;color:#666666;transform:scaleX(0.981);transform-origin:0 0;">100%</div>
<div class="a" style="left:860px;top:235.5px;width:12px;height:12.5px;background:#585858;"></div>
<div class="a" style="left:864.5px;top:241.2px;width:3px;height:1.6px;background:#b0b0b0;"></div>
<div class="a" style="left:733px;top:250.5px;width:142px;height:1px;background:#404040;"></div>
<div class="t" style="left:736.60px;top:257px;font-size:7px;color:#b0b0b0;transform:scaleX(0.931);transform-origin:0 0;">Lock:</div>
<svg class="a" style="left:758px;top:256.5px;" width="8" height="8" viewBox="0 0 8 8"><rect x="0.5" y="0.5" width="2.3" height="2.3" fill="#a8a8a8"/><rect x="0.5" y="2.8" width="2.3" height="2.3" fill="#5e5e5e"/><rect x="0.5" y="5.1" width="2.3" height="2.3" fill="#a8a8a8"/><rect x="2.8" y="0.5" width="2.3" height="2.3" fill="#5e5e5e"/><rect x="2.8" y="2.8" width="2.3" height="2.3" fill="#a8a8a8"/><rect x="2.8" y="5.1" width="2.3" height="2.3" fill="#5e5e5e"/><rect x="5.1" y="0.5" width="2.3" height="2.3" fill="#a8a8a8"/><rect x="5.1" y="2.8" width="2.3" height="2.3" fill="#5e5e5e"/><rect x="5.1" y="5.1" width="2.3" height="2.3" fill="#a8a8a8"/><rect x="0.4" y="0.4" width="7.1" height="7.1" fill="none" stroke="#9a9a9a" stroke-width="0.7"/></svg>
<svg class="a" style="left:771px;top:255.5px;" width="10" height="9" viewBox="0 0 10 9"><path d="M9.3 0.7 L5.2 4.8" stroke="#9a9a9a" stroke-width="1.4" stroke-linecap="round"/><path d="M0.4 8.6 C1.3 6.9 3 5.7 5.2 5 C5.8 6.2 5 8 3 8.5 C2.1 8.7 1.2 8.8 0.4 8.6Z" fill="#9a9a9a"/></svg>
<svg class="a" style="left:785.5px;top:256px;" width="9" height="9" viewBox="0 0 9 9"><path d="M4.5 1.2 L4.5 7.8 M1.2 4.5 L7.8 4.5" stroke="#9a9a9a" stroke-width="0.9"/><path d="M4.5 0 L3 1.8 L6 1.8Z M4.5 9 L3 7.2 L6 7.2Z M0 4.5 L1.8 3 L1.8 6Z M9 4.5 L7.2 3 L7.2 6Z" fill="#9a9a9a"/></svg>
<svg class="a" style="left:800.5px;top:256px;" width="7.5" height="9" viewBox="0 0 7.5 9"><path d="M1.9 4 L1.9 2.7 C1.9 0.4 5.6 0.4 5.6 2.7 L5.6 4" fill="none" stroke="#9a9a9a" stroke-width="1"/><rect x="0.5" y="4" width="6.5" height="4.6" fill="#9a9a9a"/><rect x="3.3" y="5.3" width="0.9" height="2" fill="#555"/></svg>
<div class="t" style="left:825.30px;top:257px;font-size:7px;color:#b0b0b0;transform:scaleX(1.011);transform-origin:0 0;">Fill:</div>
<div class="a" style="left:838.5px;top:254px;width:22.5px;height:11px;background:#4a4a4a;"></div>
<div class="t" style="left:840.32px;top:258px;font-size:6.6px;color:#666666;transform:scaleX(0.981);transform-origin:0 0;">100%</div>
<div class="a" style="left:861px;top:254px;width:11px;height:11px;background:#585858;"></div>
<div class="a" style="left:865px;top:259.2px;width:3px;height:1.6px;background:#b0b0b0;"></div>
<div class="a" style="left:733px;top:269px;width:142px;height:1px;background:#3c3c3c;"></div>
<div class="a" style="left:733px;top:270px;width:133px;height:183.5px;background:#474747;"></div>
<div class="a" style="left:866px;top:270px;width:5px;height:183.5px;background:#3c3c3c;"></div>
<div class="a" style="left:871px;top:270px;width:4px;height:183.5px;background:#4e4e4e;"></div>
<div class="a" style="left:733px;top:270px;width:19.5px;height:17.5px;background:#4e4e4e;"></div>
<div class="a" style="left:752.5px;top:270px;width:113.5px;height:17.5px;background:#5b6c85;"></div>
<div class="a" style="left:733px;top:287.5px;width:133px;height:1px;background:#3e3e3e;"></div>
<svg class="a" style="left:738px;top:276px;" width="10" height="6" viewBox="0 0 10 6"><path d="M0.5 3 C2.5 0.2 7.5 0.2 9.5 3 C7.5 5.8 2.5 5.8 0.5 3Z" fill="#d0d0d0"/><circle cx="5" cy="3" r="1.6" fill="#4e4e4e"/></svg>
<div class="a" style="left:754.5px;top:272px;width:21.5px;height:13px;background:#ffffff;border:1px solid #2c2c2c;"></div>
<div class="t" style="left:782.20px;top:276px;font-size:7.2px;color:#f0f0f0;font-style:italic;transform:scaleX(0.892);transform-origin:0 0;">Background</div>
<svg class="a" style="left:848px;top:274.5px;" width="7.5" height="8.5" viewBox="0 0 7.5 8.5"><path d="M1.8 3.8 L1.8 2.6 C1.8 0.2 5.7 0.2 5.7 2.6 L5.7 3.8" fill="none" stroke="#d8d8d8" stroke-width="0.9"/><rect x="0.5" y="3.8" width="6.5" height="4.4" fill="none" stroke="#d8d8d8" stroke-width="0.9"/><rect x="3.2" y="5" width="1.1" height="2" fill="#d8d8d8"/></svg>
<div class="a" style="left:733px;top:453px;width:142px;height:13px;background:#515151;border-top:1px solid #3a3a3a;box-shadow:inset 0 1px 0 #5a5a5a;"></div>
<svg class="a" style="left:744.5px;top:457px;" width="10.5" height="7" viewBox="0 0 10.5 7"><path d="M3.8 0.8 L2.6 0.8 C1.3 0.8 0.6 1.9 0.6 3.3 C0.6 4.7 1.3 5.8 2.6 5.8 L3.8 5.8 M6.4 0.8 L7.8 0.8 C9.1 0.8 9.8 1.9 9.8 3.3 C9.8 4.7 9.1 5.8 7.8 5.8 L6.4 5.8 M3.3 3.3 L7.1 3.3" fill="none" stroke="#a8a8a8" stroke-width="1.1"/></svg>
<div class="t" style="left:763.20px;top:457px;font-size:9.5px;color:#a0a0a0;font-style:italic;font-family:'Liberation Serif';transform:scaleX(1.186);transform-origin:0 0;">fx</div>
<svg class="a" style="left:780px;top:457px;" width="10" height="8" viewBox="0 0 10 8"><rect x="0" y="0" width="10" height="8" fill="#a8a8a8"/><circle cx="5" cy="4" r="2.3" fill="#3a3a3a"/></svg>
<svg class="a" style="left:797.5px;top:456.5px;" width="10" height="9" viewBox="0 0 10 9"><circle cx="4" cy="4" r="3.5" fill="#a8a8a8"/><path d="M2 6.5 L6.5 1.8" stroke="#444" stroke-width="1"/><rect x="8" y="7.5" width="1.3" height="1.3" fill="#a8a8a8"/></svg>
<svg class="a" style="left:815px;top:457px;" width="9" height="8" viewBox="0 0 9 8"><path d="M0.5 1.5 L3.5 1.5 L4.5 0.5 L8.5 0.5 L8.5 7.5 L0.5 7.5Z" fill="#a8a8a8"/></svg>
<svg class="a" style="left:832.5px;top:456.5px;" width="8" height="9" viewBox="0 0 8 9"><rect x="0.5" y="0.5" width="7" height="8" fill="#a8a8a8"/><path d="M0.5 4.5 L3.5 4.5 L3.5 8.5" fill="none" stroke="#444" stroke-width="0.8"/></svg>
<svg class="a" style="left:849px;top:456.5px;" width="8" height="9.5" viewBox="0 0 8 9.5"><rect x="0.5" y="1" width="7" height="1" fill="#7a7a7a"/><rect x="3" y="0" width="2" height="1" fill="#7a7a7a"/><path d="M1.2 2.5 L6.8 2.5 L6.2 9 L1.8 9Z" fill="#6e6e6e"/></svg>
<div class="t" style="left:688.70px;top:419px;font-size:12.8px;color:rgba(255,255,255,0.34);transform:scaleX(0.981);transform-origin:0 0;">Activate Windows</div>
<div class="t" style="left:688.70px;top:435px;font-size:9.8px;color:rgba(255,255,255,0.34);transform:scaleX(0.975);transform-origin:0 0;">Go to Settings to activate Windows.</div>
<div class="a" style="left:18px;top:193.4px;width:57.5px;height:12.4px;background:#fdfdd8;border:1px solid #151515;"></div>
<div class="t" style="left:21.00px;top:197px;font-size:8.2px;color:#2a2a2a;transform:scaleX(0.924);transform-origin:0 0;">Brush Tool (B)</div>
<svg class="a" style="left:17.8px;top:182.6px;" width="10" height="13" viewBox="0 0 10 13"><path d="M1 0.8 L1 10.5 L3.5 8.3 L5.3 12 L7 11.2 L5.3 7.7 L8.6 7.5Z" fill="#ffffff" stroke="#111111" stroke-width="0.9"/></svg>
</body></html>
